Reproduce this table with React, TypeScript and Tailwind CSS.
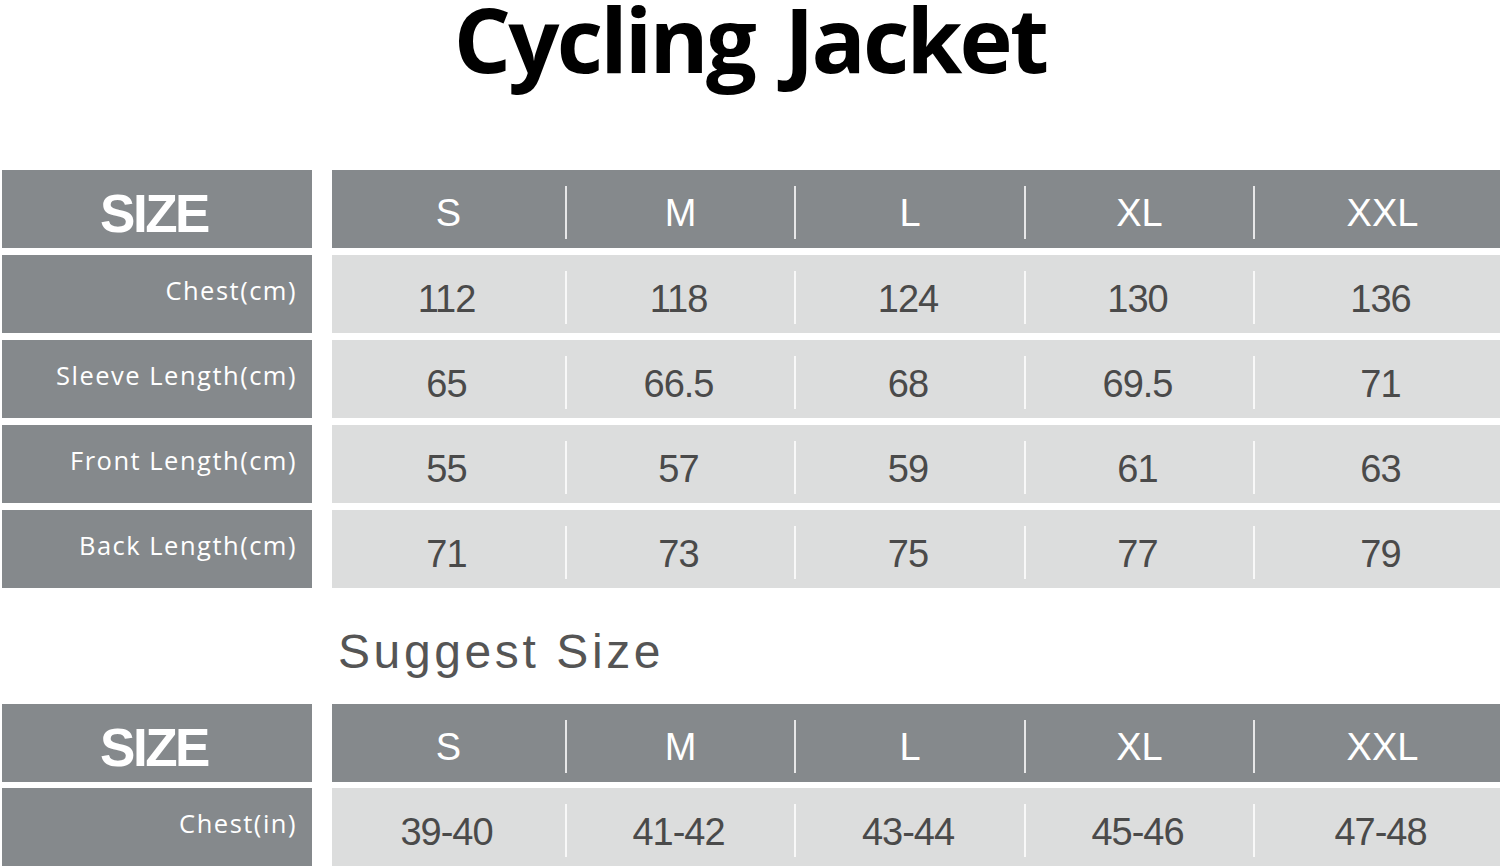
const sizes = ["S", "M", "L", "XL", "XXL"];

const measurements = [
  { label: "Chest(cm)", values: ["112", "118", "124", "130", "136"] },
  { label: "Sleeve Length(cm)", values: ["65", "66.5", "68", "69.5", "71"] },
  { label: "Front Length(cm)", values: ["55", "57", "59", "61", "63"] },
  { label: "Back Length(cm)", values: ["71", "73", "75", "77", "79"] },
];

const suggested = [{ label: "Chest(in)", values: ["39-40", "41-42", "43-44", "45-46", "47-48"] }];

// last column is wider and its text sits a bit right of center
const colWidths = ["w-[233px]", "w-[227px]", "w-[228px]", "w-[227px]", "flex-1 pl-[10px]"];

function Divider() {
  return <span className="w-[2px] h-[53px] self-end mb-[9px] bg-white/80 shrink-0"></span>;
}

function HeaderRow() {
  return (
    <div className="flex gap-[20px] h-[78px]">
      <div className="w-[310px] shrink-0 bg-[#85898c] flex items-center justify-center pt-2 pr-[6px]">
        <span className="font-['Liberation_Sans',Arial,sans-serif] font-bold text-[53px] leading-none tracking-[-2.5px] text-white">
          SIZE
        </span>
      </div>
      <div className="flex-1 flex bg-[#85898c]">
        {sizes.map((s, i) => (
          <div key={s} className="contents">
            {i > 0 && <Divider />}
            <div className={`${colWidths[i]} flex items-center justify-center pt-2`}>
              <span className="font-['Liberation_Sans',Arial,sans-serif] text-[38px] leading-none text-white">{s}</span>
            </div>
          </div>
        ))}
      </div>
    </div>
  );
}

function DataRow({ label, values }: { label: string; values: string[] }) {
  return (
    <div className="flex gap-[20px] h-[78px]">
      <div className="w-[310px] shrink-0 bg-[#85898c] flex items-center justify-end pr-[15px] pb-[6px]">
        <span className="font-['Open_Sans',sans-serif] text-[25.5px] leading-none tracking-[1.5px] text-white">{label}</span>
      </div>
      <div className="flex-1 flex bg-[#dcdddd]">
        {values.map((v, i) => (
          <div key={i} className="contents">
            {i > 0 && <Divider />}
            <div className={`${colWidths[i]} flex items-center justify-center pt-[10px] pr-[4px]`}>
              <span className="font-['Liberation_Sans',Arial,sans-serif] text-[38px] leading-none tracking-[-1px] text-[#4a4a4a]">
                {v}
              </span>
            </div>
          </div>
        ))}
      </div>
    </div>
  );
}

export default function App() {
  return (
    <div className="w-[1500px] h-[867px] bg-white overflow-hidden">
      <h1 className="text-center font-['Open_Sans',sans-serif] font-bold text-[90px] leading-[76px] tracking-[-2.8px] [word-spacing:10px] text-black mb-[94px]">
        Cycling Jacket
      </h1>

      <div className="pl-[2px] flex flex-col gap-[7px]">
        <HeaderRow />
        {measurements.map((m) => (
          <DataRow key={m.label} label={m.label} values={m.values} />
        ))}
      </div>

      <div className="pl-[338px] pt-[40px] pb-[28px]">
        <p className="font-['Liberation_Sans',Arial,sans-serif] text-[48px] leading-none tracking-[3.6px] text-[#555555]">
          Suggest Size
        </p>
      </div>

      <div className="pl-[2px] flex flex-col gap-[6px]">
        <HeaderRow />
        {suggested.map((m) => (
          <DataRow key={m.label} label={m.label} values={m.values} />
        ))}
      </div>
    </div>
  );
}
